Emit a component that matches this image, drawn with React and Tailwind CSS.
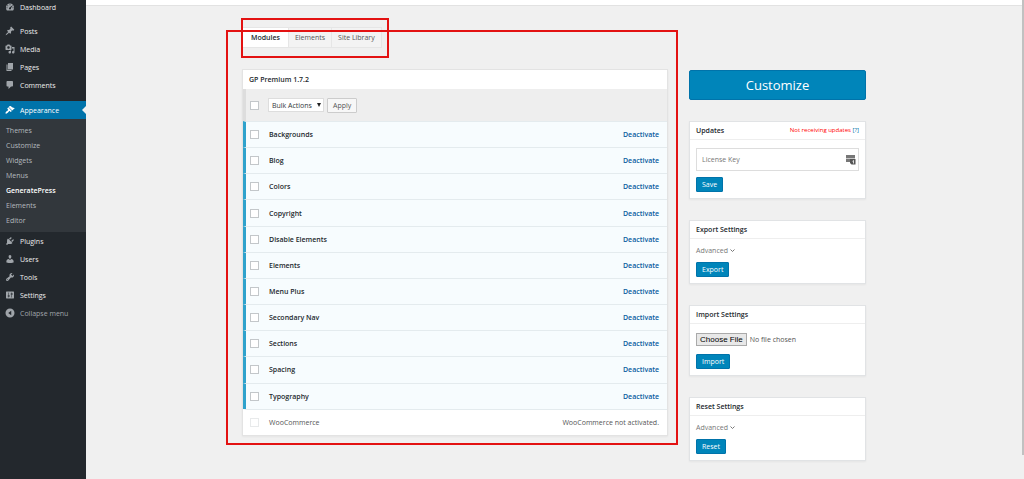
const ICONS = {
  dashboard: (
    <path d="M3.8 17h12.4c1.2-1.6 1.9-3.500 1.900-5.600C18.100 6.800 14.500 3 10 3s-8.100 3.800-8.100 8.400c0 2.100.7 4 1.900 5.600zM10 4.500a1.100 1.100 0 1 1 0 2.200 1.100 1.100 0 0 1 0-2.200zM5.500 6.500a1.100 1.100 0 1 1 0 2.200 1.100 1.100 0 0 1 0-2.200zm9.600-.2.700.6-3.900 5.200c.6 1.600-.4 2.900-1.900 2.900-1.900 0-2.900-2-1.600-3.300zM4 10.500a1.100 1.100 0 1 1 0 2.200 1.100 1.100 0 0 1 0-2.200zm12 0a1.100 1.100 0 1 1 0 2.200 1.100 1.100 0 0 1 0-2.200z" fillRule="evenodd" />
  ),
  posts: (
    <path d="M10.440 3.020l1.820-1.820 6.360 6.350-1.830 1.820c-1.050-.680-2.480-.570-3.410.360l-.750.750c-.920.930-1.040 2.350-.350 3.410l-1.830 1.820-2.410-2.410-2.800 2.790c-.420.420-3.380 2.710-3.800 2.290s1.860-3.390 2.280-3.810l2.790-2.790L4.100 9.360l1.830-1.820c1.050.690 2.480.570 3.400-.360l.750-.750c.930-.920 1.050-2.350.360-3.410z" />
  ),
  media: (
    <path d="M13 11V4c0-.550-.450-1-1-1h-1.670L9 1H5L3.670 3H2c-.550 0-1 .450-1 1v7c0 .550.450 1 1 1h10c.550 0 1-.450 1-1zM7 4.500c1.380 0 2.500 1.120 2.500 2.500S8.380 9.500 7 9.500 4.500 8.380 4.500 7 5.620 4.500 7 4.500zM14 6h5v10.500c0 1.380-1.120 2.500-2.500 2.500S14 17.880 14 16.500s1.120-2.500 2.500-2.500c.170 0 .340.020.500.050V9h-3V6zm-4 8.050V13h2v3.500c0 1.380-1.120 2.500-2.500 2.500S7 17.880 7 16.500 8.120 14 9.500 14c.170 0 .340.020.500.050z" fillRule="evenodd" />
  ),
  pages: <path d="M6 15V2h10v13H6zm-1 1h8v2H3V5h2v11z" />,
  comments: <path d="M5 2h9c1.100 0 2 .9 2 2v7c0 1.100-.9 2-2 2h-2l-5 5v-5H5c-1.100 0-2-.9-2-2V4c0-1.100.9-2 2-2z" />,
  appearance: (
    <path d="M14.480 11.060L7.410 3.990l1.500-1.500c.500-.560 2.300-.470 3.510.320 1.210.800 1.430 1.280 2.910 2.100 1.180.640 2.450 1.260 4.450.850zm-.710.710L6.700 4.700 4.930 6.470c-.390.390-.390 1.020 0 1.410l1.060 1.060c.390.390.390 1.030 0 1.420-.600.600-1.430 1.110-2.210 1.690-.350.260-.700.530-1.010.840C1.430 14.230.400 16.080 1.400 17.070c.990 1 2.840-.030 4.180-1.360.310-.310.580-.660.850-1.020.570-.780 1.080-1.610 1.690-2.210.390-.390 1.020-.390 1.410 0l1.060 1.060c.390.390 1.020.390 1.410 0z" />
  ),
  plugins: (
    <path d="M13.110 4.360L9.870 7.600 8 5.730l3.240-3.240c.350-.340 1.050-.2 1.560.320.520.510.660 1.210.310 1.550zm-8 1.770l.910-1.120 9.010 9.010-1.190.840c-.710.710-2.630 1.160-3.820 1.160H6.140L4.900 17.260c-.590.590-1.540.590-2.120 0-.590-.580-.590-1.530 0-2.120l1.240-1.240v-3.880c0-1.130.4-3.190 1.090-3.890zm7.260 3.970l3.240-3.240c.340-.350 1.040-.210 1.550.310.520.510.660 1.210.310 1.550l-3.240 3.250z" />
  ),
  users: (
    <path d="M10 9.250c-2.270 0-2.730-3.440-2.730-3.440C7 4.020 7.820 2 9.970 2c2.160 0 2.980 2.020 2.710 3.810 0 0-.410 3.440-2.680 3.440zm0 2.570L12.720 10c2.390 0 4.520 2.330 4.520 4.530v2.490s-3.650 1.130-7.240 1.130c-3.650 0-7.240-1.130-7.240-1.130v-2.490c0-2.250 1.940-4.480 4.470-4.480z" />
  ),
  tools: (
    <path d="M16.680 9.770c-1.340 1.340-3.300 1.670-4.950.990l-5.410 6.520c-.990.990-2.590.990-3.580 0s-.990-2.590 0-3.570l6.520-5.420c-.680-1.650-.350-3.610.990-4.950 1.280-1.280 3.120-1.620 4.720-1.060l-2.890 2.890 2.820 2.820 2.860-2.870c.530 1.580.180 3.390-1.080 4.650zM3.810 16.210c.4.390 1.040.390 1.430 0 .4-.4.4-1.040 0-1.430-.390-.4-1.030-.4-1.430 0-.390.390-.390 1.030 0 1.430z" />
  ),
  settings: (
    <path d="M18 16V4c0-.550-.450-1-1-1H3c-.550 0-1 .450-1 1v12c0 .550.450 1 1 1h14c.550 0 1-.450 1-1zM8 11h1c.550 0 1 .450 1 1s-.450 1-1 1H8v1.500c0 .280-.220.500-.500.500s-.500-.220-.500-.500V13H6c-.550 0-1-.450-1-1s.450-1 1-1h1V5.500c0-.280.220-.500.500-.500s.500.220.500.500V11zm5-2h-1c-.550 0-1-.450-1-1s.450-1 1-1h1V5.500c0-.280.220-.500.500-.500s.500.220.500.500V7h1c.550 0 1 .450 1 1s-.450 1-1 1h-1v5.500c0 .280-.220.500-.500.500s-.500-.220-.500-.500V9z" />
  ),
  collapse: <path d="M10 1a9 9 0 1 1 0 18 9 9 0 0 1 0-18zm2.500 4.500L6.500 10l6 4.500z" fillRule="evenodd" />,
};

function Icon({ name }) {
  return (
    <svg viewBox="0 0 20 20" className="size-[10px] shrink-0 fill-current" aria-hidden="true">
      {ICONS[name]}
    </svg>
  );
}

function MenuItem({ icon, children }) {
  return (
    <li>
      <a href="#" className="flex h-[18px] items-center gap-[5px] pl-[5px] text-[#eeeeee]">
        <span className="text-[#a0a5aa]">
          <Icon name={icon} />
        </span>
        {children}
      </a>
    </li>
  );
}

const SUBMENU = ["Themes", "Customize", "Widgets", "Menus", "GeneratePress", "Elements", "Editor"];

function Sidebar() {
  return (
    <nav className="w-[86px] shrink-0 bg-[#23282d] text-[7px] leading-none" aria-label="Admin menu">
      <ul>
        <li>
          <a href="#" className="mb-2 flex h-[14px] items-center gap-[5px] pl-[5px] text-[#eeeeee]">
            <span className="text-[#a0a5aa]">
              <Icon name="dashboard" />
            </span>
            Dashboard
          </a>
        </li>
        <MenuItem icon="posts">Posts</MenuItem>
        <MenuItem icon="media">Media</MenuItem>
        <MenuItem icon="pages">Pages</MenuItem>
        <MenuItem icon="comments">Comments</MenuItem>
        <li className="mt-[7px]">
          <a href="#" className="relative flex h-[18px] items-center gap-[5px] bg-[#0073aa] pl-[5px] text-white">
            <Icon name="appearance" />
            Appearance
            <svg viewBox="0 0 4 8" className="absolute right-0 top-[5px] h-2 w-1 fill-[#f0f0f0]" aria-hidden="true">
              <path d="M4 0v8L0 4z" />
            </svg>
          </a>
          <ul className="bg-[#32373c] py-1">
            {SUBMENU.map((label) => (
              <li key={label}>
                <a
                  href="#"
                  className={
                    label === "GeneratePress"
                      ? "flex h-[15px] items-center pl-[6px] font-semibold text-white"
                      : "flex h-[15px] items-center pl-[6px] text-[#b4b9be]"
                  }
                >
                  {label}
                </a>
              </li>
            ))}
          </ul>
        </li>
        <MenuItem icon="plugins">Plugins</MenuItem>
        <MenuItem icon="users">Users</MenuItem>
        <MenuItem icon="tools">Tools</MenuItem>
        <MenuItem icon="settings">Settings</MenuItem>
        <li>
          <button type="button" className="flex h-[18px] items-center gap-[5px] pl-[5px] text-[#a0a5aa]">
            <Icon name="collapse" />
            Collapse menu
          </button>
        </li>
      </ul>
    </nav>
  );
}

const MODULES = [
  "Backgrounds",
  "Blog",
  "Colors",
  "Copyright",
  "Disable Elements",
  "Elements",
  "Menu Plus",
  "Secondary Nav",
  "Sections",
  "Spacing",
  "Typography",
];

function Check({ label, disabled }) {
  return (
    <input
      type="checkbox"
      aria-label={label}
      disabled={disabled}
      className="block size-[9px] appearance-none border border-[#c3c7ca] bg-white disabled:border-[#e8eaeb]"
    />
  );
}

function Modules() {
  return (
    <section className="border border-[#e3e3e3] bg-white shadow-xs">
      <h2 className="flex h-[19px] items-center px-[6px] font-semibold text-[#23282d]">GP Premium 1.7.2</h2>
      <div className="flex h-8 items-center border-l-[3px] border-[#dddddd] bg-[#eeeeee] pl-1">
        <Check label="Select all modules" />
        <span className="relative ml-[9px] flex items-center">
          <select
            aria-label="Bulk actions"
            className="h-[14px] w-14 appearance-none border border-[#dddddd] bg-white pl-[3px] leading-none text-[#32373c]"
          >
            <option>Bulk Actions</option>
          </select>
          <svg viewBox="0 0 4 4" className="pointer-events-none absolute right-[3px] size-1 fill-[#222222]" aria-hidden="true">
            <path d="M0 0h4L2 4z" />
          </svg>
        </span>
        <button
          type="button"
          className="ml-[3px] h-[15px] rounded-[1px] border border-[#cccccc] bg-[#f7f7f7] px-[5px] text-[#555555]"
        >
          Apply
        </button>
      </div>
      <table className="h-[314px] w-full border-separate border-spacing-0">
        <tbody>
          {MODULES.map((name) => (
            <tr key={name} className="bg-[#f7fcfe]">
              <td className="w-[26px] border-l-[3px] border-t border-l-[#2ea2cc] border-t-[#e4ebee] pl-1">
                <Check label={name} />
              </td>
              <td className="border-t border-[#e4ebee] font-semibold text-[#23282d]">{name}</td>
              <td className="border-t border-[#e4ebee] pr-2 text-right font-semibold">
                <a href="#" className="text-[#0a5c9e]">
                  Deactivate
                </a>
              </td>
            </tr>
          ))}
          <tr>
            <td className="border-l-[3px] border-t border-l-white border-t-[#e4ebee] pl-1">
              <Check label="WooCommerce" disabled />
            </td>
            <td className="border-t border-[#e4ebee]">WooCommerce</td>
            <td className="border-t border-[#e4ebee] pr-2 text-right">WooCommerce not activated.</td>
          </tr>
        </tbody>
      </table>
    </section>
  );
}

function Card({ title, extra, children }) {
  return (
    <section className="border border-[#e1e3e5] bg-white shadow-xs">
      <div className="flex h-[18px] items-center justify-between border-b border-[#eeeeee] px-[6px]">
        <h3 className="font-semibold text-[#23282d]">{title}</h3>
        {extra}
      </div>
      <div className="px-[6px] pb-[6px]">{children}</div>
    </section>
  );
}

function Primary({ children }) {
  return (
    <button
      type="button"
      className="block h-[15px] rounded-[1px] border border-[#0073aa] bg-[#0085ba] px-[5px] leading-none text-white"
    >
      {children}
    </button>
  );
}

function Advanced() {
  return (
    <button type="button" className="mb-[7px] mt-[6px] flex h-[10px] items-center gap-[2px] text-[#777777]">
      Advanced
      <svg viewBox="0 0 5 3" className="h-[3px] w-[5px] fill-none stroke-current" aria-hidden="true">
        <path d="M.5.5l2 2 2-2" />
      </svg>
    </button>
  );
}

export default function App() {
  return (
    <div className="flex min-h-screen bg-[#f0f0f0] font-['Open_Sans','Noto_Sans',sans-serif] text-[7px] leading-[9px] text-[#555555]">
      <Sidebar />
      <div className="grow">
        <header className="h-[6px] border-b border-[#e2e2e2] bg-white" />
        <main className="relative mx-auto max-w-[624px] pt-[21px]">
          <div className="flex h-[21px]">
            <a href="#" className="flex items-center border border-[#e6e6e6] bg-white px-2 font-semibold text-[#23282d]">
              Modules
            </a>
            <a href="#" className="flex items-center border-y border-r border-[#e6e6e6] bg-[#f3f3f3] px-[6px]">
              Elements
            </a>
            <a href="#" className="flex items-center border-y border-r border-[#e6e6e6] bg-[#f3f3f3] px-[6px]">
              Site Library
            </a>
          </div>
          <div className="mt-[21px] flex items-start gap-[21px]">
            <div className="grow">
              <Modules />
            </div>
            <aside className="flex w-[177px] shrink-0 flex-col gap-[21px]">
              <a
                href="#"
                className="mt-px flex h-[30px] items-center justify-center rounded-[2px] border border-[#0073aa] bg-[#0085ba] text-[13px] text-white"
              >
                Customize
              </a>
              <Card
                title="Updates"
                extra={
                  <span className="text-[6px] text-[#ff0000]">
                    Not receiving updates{" "}
                    <a href="#" className="text-[#0073aa]">
                      [?]
                    </a>
                  </span>
                }
              >
                <div className="relative mb-[6px] mt-2 flex items-center">
                  <input
                    type="text"
                    aria-label="License Key"
                    placeholder="License Key"
                    className="h-[23px] w-full border border-[#dddddd] bg-white px-[5px] placeholder:text-[#777777]"
                  />
                  <svg viewBox="0 0 10 11" className="absolute right-[3px] h-[11px] w-[10px]" aria-hidden="true">
                    <path d="M0 1h9v7H0z" fill="#777777" />
                    <path d="M0 4.500h9" stroke="#dddddd" strokeWidth=".8" />
                    <path d="M4 5h5.500v5.500H5.500L4 9z" fill="#555555" />
                    <path d="M7.500 6.500v3M6.500 7.300l1-.8" stroke="#ffffff" fill="none" strokeWidth=".8" />
                  </svg>
                </div>
                <Primary>Save</Primary>
              </Card>
              <Card title="Export Settings">
                <Advanced />
                <Primary>Export</Primary>
              </Card>
              <Card title="Import Settings">
                <input
                  type="file"
                  aria-label="Settings file"
                  className="mb-2 mt-[9px] block h-[13px] w-full file:mr-[3px] file:h-[13px] file:border file:border-solid file:border-[#aaaaaa] file:bg-[#e8e8e8] file:px-[3px] file:font-['Liberation_Sans',sans-serif] file:text-[8px] file:font-normal file:leading-none file:text-black"
                />
                <Primary>Import</Primary>
              </Card>
              <Card title="Reset Settings">
                <Advanced />
                <Primary>Reset</Primary>
              </Card>
            </aside>
          </div>
          <div className="pointer-events-none absolute -left-px top-[12px] h-[40px] w-[148px] border-2 border-[#e31212]" />
          <div className="pointer-events-none absolute -left-4 top-6 h-[415px] w-[452px] border-2 border-[#e31212]" />
        </main>
      </div>
      <div className="h-[95vh] w-[2px] shrink-0 bg-[#c1c1c1]" />
    </div>
  );
}
